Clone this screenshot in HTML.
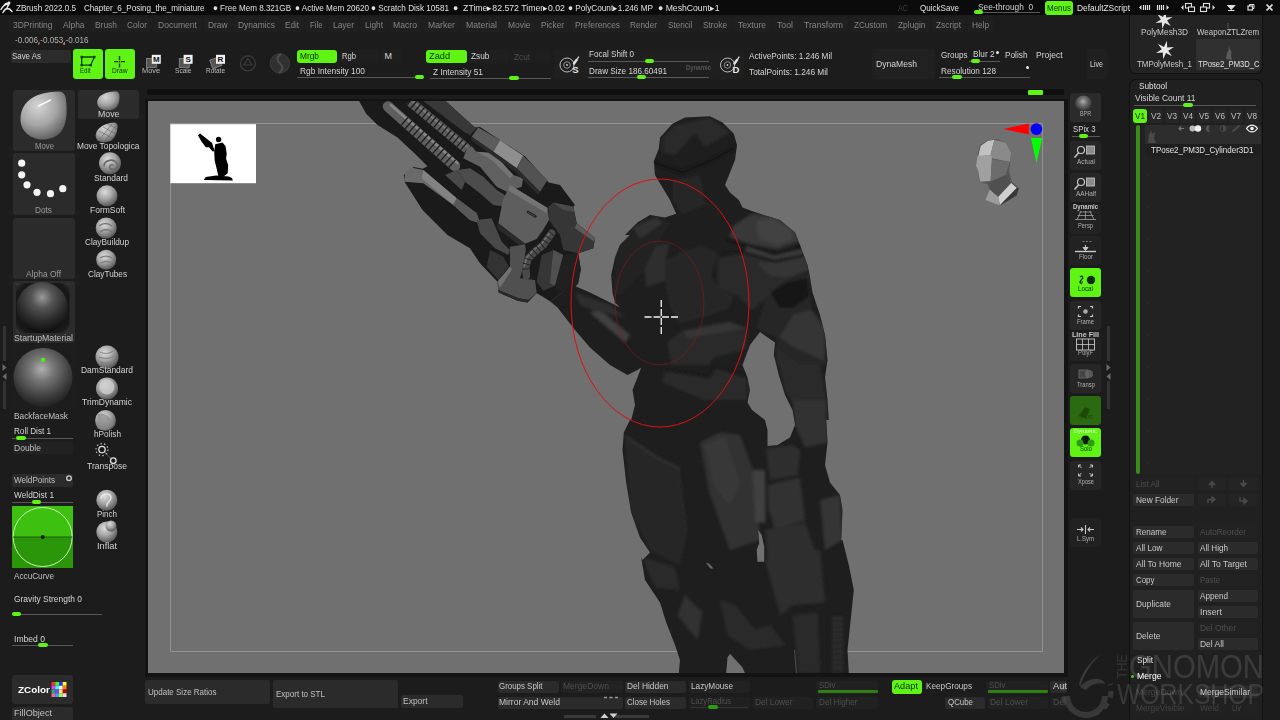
<!DOCTYPE html>
<html lang="en"><head><meta charset="utf-8"><title>ZBrush 2022.0.5 - Chapter_6_Posing_the_miniature</title>
<style>
html,body{margin:0;padding:0;background:#1c1c1c;}
body{width:1280px;height:720px;position:relative;overflow:hidden;font:9px "Liberation Sans", sans-serif;}
#bg div{position:absolute;}
#tx span{position:absolute;white-space:pre;line-height:1.16;transform-origin:0 0;}
#ov>*{position:absolute;}
</style></head><body>
<div id="bg">
<div style="left:0px;top:0px;width:1280px;height:15px;background:#0b0b0b;"></div>
<div style="left:974px;top:12px;width:66px;height:1px;background:#585858;"></div>
<div style="left:974px;top:10px;width:9px;height:4px;background:#60f414;border-radius:2px;"></div>
<div style="left:1044.5px;top:1px;width:28.5px;height:13.5px;background:#60f414;border-radius:3px;"></div>
<div style="left:7.5px;top:17px;width:49.5px;height:15px;background:#1f1f1f;border-radius:3px;"></div>
<div style="left:57.5px;top:17px;width:31.5px;height:15px;background:#1f1f1f;border-radius:3px;"></div>
<div style="left:89.5px;top:17px;width:32.0px;height:15px;background:#1f1f1f;border-radius:3px;"></div>
<div style="left:122px;top:17px;width:30px;height:15px;background:#1f1f1f;border-radius:3px;"></div>
<div style="left:152.5px;top:17px;width:49.0px;height:15px;background:#1f1f1f;border-radius:3px;"></div>
<div style="left:202.5px;top:17px;width:29.5px;height:15px;background:#1f1f1f;border-radius:3px;"></div>
<div style="left:232.5px;top:17px;width:47.0px;height:15px;background:#1f1f1f;border-radius:3px;"></div>
<div style="left:280px;top:17px;width:24px;height:15px;background:#1f1f1f;border-radius:3px;"></div>
<div style="left:304.5px;top:17px;width:22.5px;height:15px;background:#1f1f1f;border-radius:3px;"></div>
<div style="left:328px;top:17px;width:31px;height:15px;background:#1f1f1f;border-radius:3px;"></div>
<div style="left:359.5px;top:17px;width:28.0px;height:15px;background:#1f1f1f;border-radius:3px;"></div>
<div style="left:388px;top:17px;width:34px;height:15px;background:#1f1f1f;border-radius:3px;"></div>
<div style="left:423px;top:17px;width:37px;height:15px;background:#1f1f1f;border-radius:3px;"></div>
<div style="left:461px;top:17px;width:41px;height:15px;background:#1f1f1f;border-radius:3px;"></div>
<div style="left:503px;top:17px;width:32.5px;height:15px;background:#1f1f1f;border-radius:3px;"></div>
<div style="left:536px;top:17px;width:33px;height:15px;background:#1f1f1f;border-radius:3px;"></div>
<div style="left:569.5px;top:17px;width:55.0px;height:15px;background:#1f1f1f;border-radius:3px;"></div>
<div style="left:625px;top:17px;width:37px;height:15px;background:#1f1f1f;border-radius:3px;"></div>
<div style="left:663px;top:17px;width:34.5px;height:15px;background:#1f1f1f;border-radius:3px;"></div>
<div style="left:698px;top:17px;width:34px;height:15px;background:#1f1f1f;border-radius:3px;"></div>
<div style="left:733px;top:17px;width:38px;height:15px;background:#1f1f1f;border-radius:3px;"></div>
<div style="left:772px;top:17px;width:26px;height:15px;background:#1f1f1f;border-radius:3px;"></div>
<div style="left:799px;top:17px;width:49px;height:15px;background:#1f1f1f;border-radius:3px;"></div>
<div style="left:849px;top:17px;width:43px;height:15px;background:#1f1f1f;border-radius:3px;"></div>
<div style="left:892.5px;top:17px;width:37.5px;height:15px;background:#1f1f1f;border-radius:3px;"></div>
<div style="left:931px;top:17px;width:35px;height:15px;background:#1f1f1f;border-radius:3px;"></div>
<div style="left:967px;top:17px;width:27px;height:15px;background:#1f1f1f;border-radius:3px;"></div>
<div style="left:37.5px;top:42.5px;width:1.5px;height:2px;background:#c85a14;"></div>
<div style="left:63px;top:42.5px;width:1.5px;height:2px;background:#c85a14;"></div>
<div style="left:10.5px;top:49.5px;width:60.5px;height:13px;background:#2b2b2b;border-radius:2px;"></div>
<div style="left:73px;top:49px;width:30px;height:30px;background:#60f414;border-radius:3px;"></div>
<div style="left:105px;top:49px;width:30px;height:30px;background:#60f414;border-radius:3px;"></div>
<div style="left:297px;top:49.5px;width:40px;height:13px;background:#60f414;border-radius:3px;"></div>
<div style="left:339px;top:49.5px;width:40px;height:13px;background:#1f1f1f;border-radius:2px;"></div>
<div style="left:381px;top:49.5px;width:20px;height:13px;background:#1f1f1f;border-radius:2px;"></div>
<div style="left:297px;top:77px;width:127px;height:1px;background:#585858;"></div>
<div style="left:414.5px;top:75px;width:9.5px;height:4px;background:#60f414;border-radius:2px;"></div>
<div style="left:426px;top:49.5px;width:41px;height:13px;background:#60f414;border-radius:3px;"></div>
<div style="left:469px;top:49.5px;width:40px;height:13px;background:#1f1f1f;border-radius:2px;"></div>
<div style="left:511px;top:49.5px;width:40px;height:13px;background:#1e1e1e;border-radius:2px;"></div>
<div style="left:430px;top:78px;width:121px;height:1px;background:#585858;"></div>
<div style="left:509px;top:76px;width:10px;height:4px;background:#60f414;border-radius:2px;"></div>
<div style="left:555px;top:49px;width:189px;height:30px;background:#1f1f1f;border-radius:3px;"></div>
<div style="left:588px;top:61px;width:121px;height:1px;background:#585858;"></div>
<div style="left:644.8px;top:59px;width:9.400000000000091px;height:4px;background:#60f414;border-radius:2px;"></div>
<div style="left:588px;top:77px;width:121px;height:1px;background:#585858;"></div>
<div style="left:636.5px;top:75px;width:9.5px;height:4px;background:#60f414;border-radius:2px;"></div>
<div style="left:872px;top:49px;width:63px;height:30px;background:#212121;border-radius:3px;"></div>
<div style="left:969px;top:61px;width:31px;height:1px;background:#585858;"></div>
<div style="left:970.5px;top:59px;width:9.5px;height:4px;background:#60f414;border-radius:2px;"></div>
<div style="left:996px;top:51px;width:3px;height:3px;background:#e8e8e8;border-radius:2px;"></div>
<div style="left:939px;top:77px;width:91px;height:1px;background:#585858;"></div>
<div style="left:952px;top:75px;width:10px;height:4px;background:#60f414;border-radius:2px;"></div>
<div style="left:1026px;top:66px;width:3px;height:3px;background:#e8e8e8;border-radius:2px;"></div>
<div style="left:1087px;top:49px;width:20px;height:30px;background:#202020;border-radius:3px;"></div>
<div style="left:147px;top:89px;width:917px;height:6px;background:#0f0f0f;"></div>
<div style="left:1027.5px;top:90px;width:15px;height:5px;background:#60f414;border-radius:1px;"></div>
<div style="left:144.5px;top:98.5px;width:923px;height:578px;background:#131313;"></div>
<div style="left:148px;top:101px;width:916px;height:572px;background:#707070;"></div>
<div style="left:2.8px;top:326px;width:2.8px;height:35px;background:#333;"></div>
<div style="left:2.8px;top:381px;width:2.8px;height:28px;background:#333;"></div>
<div style="left:13px;top:90px;width:62px;height:61px;background:#2b2b2b;border-radius:3px;"></div>
<div style="left:78px;top:90px;width:61px;height:29px;background:#2b2b2b;border-radius:3px;"></div>
<div style="left:13px;top:153px;width:62px;height:62px;background:#2b2b2b;border-radius:3px;"></div>
<div style="left:13px;top:218px;width:62px;height:61px;background:#2b2b2b;border-radius:3px;"></div>
<div style="left:13px;top:281px;width:62px;height:62px;background:#2b2b2b;border-radius:3px;"></div>
<div style="left:13px;top:345px;width:62px;height:64px;background:#1d1d1d;border-radius:3px;"></div>
<div style="left:12px;top:438px;width:61px;height:1px;background:#585858;"></div>
<div style="left:16px;top:436px;width:10px;height:4px;background:#60f414;border-radius:2px;"></div>
<div style="left:12px;top:442px;width:61px;height:12px;background:#222;border-radius:2px;"></div>
<div style="left:12px;top:474px;width:61px;height:12.5px;background:#2b2b2b;border-radius:2px;"></div>
<div style="left:12px;top:502px;width:61px;height:1px;background:#585858;"></div>
<div style="left:32px;top:500px;width:9px;height:4px;background:#60f414;border-radius:2px;"></div>
<div style="left:12px;top:506px;width:61px;height:30.5px;background:#3dc010;"></div>
<div style="left:12px;top:536.5px;width:61px;height:31px;background:#2c960a;"></div>
<div style="left:12px;top:614px;width:90px;height:1px;background:#585858;"></div>
<div style="left:12px;top:612px;width:9px;height:4px;background:#60f414;border-radius:2px;"></div>
<div style="left:12px;top:645px;width:61px;height:1px;background:#585858;"></div>
<div style="left:38px;top:643px;width:9.5px;height:4px;background:#60f414;border-radius:2px;"></div>
<div style="left:12px;top:674.5px;width:61px;height:29px;background:#2b2b2b;border-radius:3px;"></div>
<div style="left:12px;top:706.5px;width:61px;height:14px;background:#2b2b2b;border-radius:2px;"></div>
<div style="left:145px;top:680px;width:125px;height:23.5px;background:#2b2b2b;border-radius:2px;"></div>
<div style="left:273px;top:680px;width:124.5px;height:27.5px;background:#2b2b2b;border-radius:2px;"></div>
<div style="left:401px;top:695px;width:61.5px;height:12.5px;background:#2b2b2b;border-radius:2px;"></div>
<div style="left:497.5px;top:681px;width:61px;height:11.5px;background:#2b2b2b;border-radius:2px;"></div>
<div style="left:561px;top:681px;width:61.5px;height:11.5px;background:#222;border-radius:2px;"></div>
<div style="left:625px;top:681px;width:61px;height:11.5px;background:#2b2b2b;border-radius:2px;"></div>
<div style="left:689px;top:681px;width:61px;height:11.5px;background:#222;border-radius:2px;"></div>
<div style="left:816px;top:681px;width:61.5px;height:13px;background:#212121;border-radius:2px;"></div>
<div style="left:817.5px;top:690px;width:60px;height:3px;background:#2f7f12;border-radius:1px;"></div>
<div style="left:891.5px;top:680px;width:30px;height:13.5px;background:#60f414;border-radius:3px;"></div>
<div style="left:986px;top:681px;width:61.5px;height:13px;background:#212121;border-radius:2px;"></div>
<div style="left:987.5px;top:690px;width:60px;height:3px;background:#2f7f12;border-radius:1px;"></div>
<div style="left:1050px;top:681px;width:17px;height:11.5px;background:#2b2b2b;border-radius:2px;"></div>
<div style="left:497.5px;top:696.5px;width:125px;height:12px;background:#2b2b2b;border-radius:2px;"></div>
<div style="left:625px;top:696.5px;width:61px;height:12px;background:#2b2b2b;border-radius:2px;"></div>
<div style="left:689px;top:696.5px;width:61px;height:12px;background:#202020;border-radius:2px;"></div>
<div style="left:691px;top:706.5px;width:57px;height:1px;background:#333;"></div>
<div style="left:707.5px;top:704.5px;width:10.0px;height:4px;background:#2f9a12;border-radius:2px;"></div>
<div style="left:752.5px;top:696.5px;width:60px;height:12px;background:#212121;border-radius:2px;"></div>
<div style="left:816px;top:696.5px;width:61.5px;height:12px;background:#212121;border-radius:2px;"></div>
<div style="left:945px;top:696.5px;width:40px;height:12px;background:#2b2b2b;border-radius:2px;"></div>
<div style="left:988px;top:696.5px;width:60px;height:12px;background:#212121;border-radius:2px;"></div>
<div style="left:1050px;top:696.5px;width:17px;height:12px;background:#212121;border-radius:2px;"></div>
<div style="left:563.5px;top:715px;width:32.5px;height:3px;background:#3a3a3a;"></div>
<div style="left:615px;top:715px;width:33.5px;height:3px;background:#3a3a3a;"></div>
<div style="left:1070px;top:92.5px;width:31px;height:29px;background:#2b2b2b;border-radius:3px;"></div>
<div style="left:1070px;top:141px;width:31px;height:29px;background:#262626;border-radius:3px;"></div>
<div style="left:1070px;top:173px;width:31px;height:29px;background:#262626;border-radius:3px;"></div>
<div style="left:1070px;top:204.5px;width:31px;height:29px;background:#222;border-radius:3px;"></div>
<div style="left:1070px;top:236px;width:31px;height:29px;background:#222;border-radius:3px;"></div>
<div style="left:1070px;top:268px;width:31px;height:29px;background:#60f414;border-radius:3px;"></div>
<div style="left:1070px;top:301px;width:31px;height:29px;background:#262626;border-radius:3px;"></div>
<div style="left:1070px;top:332px;width:31px;height:29px;background:#222;border-radius:3px;"></div>
<div style="left:1070px;top:364px;width:31px;height:29px;background:#262626;border-radius:3px;"></div>
<div style="left:1070px;top:396px;width:31px;height:29px;background:#2c6a12;border-radius:3px;"></div>
<div style="left:1070px;top:428px;width:31px;height:29px;background:#60f414;border-radius:3px;"></div>
<div style="left:1070px;top:461px;width:31px;height:29px;background:#262626;border-radius:3px;"></div>
<div style="left:1070px;top:518px;width:31px;height:29px;background:#212121;border-radius:3px;"></div>
<div style="left:1072px;top:135.5px;width:28px;height:1px;background:#585858;"></div>
<div style="left:1079px;top:133.5px;width:9px;height:4px;background:#60f414;border-radius:2px;"></div>
<div style="left:1107px;top:326px;width:2.8px;height:35px;background:#333;"></div>
<div style="left:1107px;top:381px;width:2.8px;height:28px;background:#333;"></div>
<div style="left:1129px;top:15px;width:134px;height:58.5px;background:#111;border-radius:0 0 7px 7px;"></div>
<div style="left:1130px;top:15px;width:132px;height:57.5px;background:#232323;border-radius:0 0 6px 6px;"></div>
<div style="left:1196px;top:39px;width:63.5px;height:30.5px;background:#303030;border-radius:2px;"></div>
<div style="left:1129px;top:78.5px;width:134px;height:642px;background:#111;border-radius:7px 7px 0 0px;"></div>
<div style="left:1130px;top:79.5px;width:132px;height:640.5px;background:#202020;border-radius:6px 6px 0 0px;"></div>
<div style="left:1134px;top:105px;width:122px;height:1px;background:#585858;"></div>
<div style="left:1183px;top:103px;width:10px;height:4px;background:#60f414;border-radius:2px;"></div>
<div style="left:1148.5px;top:109px;width:14.5px;height:13.5px;background:#262626;border-radius:2px;"></div>
<div style="left:1164.5px;top:109px;width:14.5px;height:13.5px;background:#262626;border-radius:2px;"></div>
<div style="left:1180.5px;top:109px;width:14.5px;height:13.5px;background:#262626;border-radius:2px;"></div>
<div style="left:1196.5px;top:109px;width:14.5px;height:13.5px;background:#262626;border-radius:2px;"></div>
<div style="left:1212.5px;top:109px;width:14.5px;height:13.5px;background:#262626;border-radius:2px;"></div>
<div style="left:1228.5px;top:109px;width:14.5px;height:13.5px;background:#262626;border-radius:2px;"></div>
<div style="left:1244.5px;top:109px;width:14.5px;height:13.5px;background:#262626;border-radius:2px;"></div>
<div style="left:1132.5px;top:109px;width:14.5px;height:14px;background:#60f414;border-radius:3px;"></div>
<div style="left:1143px;top:124.5px;width:118px;height:349px;background:#222222;"></div>
<div style="left:1144.5px;top:124.5px;width:116px;height:32px;background:#2d2d2d;border-radius:2px;"></div>
<div style="left:1144.5px;top:144px;width:116px;height:12.5px;background:#1f1f1f;border-radius:0 0 2px 2px;"></div>
<div style="left:1135.5px;top:124.5px;width:4.5px;height:349px;background:#3a8a1c;border-radius:2px;"></div>
<div style="left:1147.5px;top:174px;width:1.5px;height:1.5px;background:#2c2c2c;"></div>
<div style="left:1147.5px;top:206px;width:1.5px;height:1.5px;background:#2c2c2c;"></div>
<div style="left:1147.5px;top:238px;width:1.5px;height:1.5px;background:#2c2c2c;"></div>
<div style="left:1147.5px;top:270px;width:1.5px;height:1.5px;background:#2c2c2c;"></div>
<div style="left:1147.5px;top:302px;width:1.5px;height:1.5px;background:#2c2c2c;"></div>
<div style="left:1147.5px;top:334px;width:1.5px;height:1.5px;background:#2c2c2c;"></div>
<div style="left:1147.5px;top:366px;width:1.5px;height:1.5px;background:#2c2c2c;"></div>
<div style="left:1147.5px;top:398px;width:1.5px;height:1.5px;background:#2c2c2c;"></div>
<div style="left:1147.5px;top:430px;width:1.5px;height:1.5px;background:#2c2c2c;"></div>
<div style="left:1147.5px;top:462px;width:1.5px;height:1.5px;background:#2c2c2c;"></div>
<div style="left:1133px;top:478px;width:61px;height:12px;background:#222;border-radius:2px;"></div>
<div style="left:1198px;top:478px;width:28px;height:12px;background:#242424;border-radius:2px;"></div>
<div style="left:1229px;top:478px;width:29px;height:12px;background:#242424;border-radius:2px;"></div>
<div style="left:1133px;top:494px;width:61px;height:12px;background:#2b2b2b;border-radius:2px;"></div>
<div style="left:1198px;top:494px;width:28px;height:12px;background:#242424;border-radius:2px;"></div>
<div style="left:1229px;top:494px;width:29px;height:12px;background:#242424;border-radius:2px;"></div>
<div style="left:1133px;top:526px;width:61px;height:12px;background:#2b2b2b;border-radius:2px;"></div>
<div style="left:1198px;top:526px;width:60px;height:12px;background:#222;border-radius:2px;"></div>
<div style="left:1133px;top:542px;width:61px;height:12px;background:#2b2b2b;border-radius:2px;"></div>
<div style="left:1198px;top:542px;width:60px;height:12px;background:#2b2b2b;border-radius:2px;"></div>
<div style="left:1133px;top:558px;width:61px;height:12px;background:#2b2b2b;border-radius:2px;"></div>
<div style="left:1198px;top:558px;width:60px;height:12px;background:#2b2b2b;border-radius:2px;"></div>
<div style="left:1133px;top:574px;width:61px;height:12px;background:#2b2b2b;border-radius:2px;"></div>
<div style="left:1198px;top:574px;width:60px;height:12px;background:#222;border-radius:2px;"></div>
<div style="left:1133px;top:590px;width:61px;height:28px;background:#2b2b2b;border-radius:2px;"></div>
<div style="left:1198px;top:590px;width:60px;height:12px;background:#2b2b2b;border-radius:2px;"></div>
<div style="left:1198px;top:606px;width:60px;height:12px;background:#2b2b2b;border-radius:2px;"></div>
<div style="left:1133px;top:622px;width:61px;height:28px;background:#2b2b2b;border-radius:2px;"></div>
<div style="left:1198px;top:622px;width:60px;height:12px;background:#222;border-radius:2px;"></div>
<div style="left:1198px;top:638px;width:60px;height:12px;background:#2b2b2b;border-radius:2px;"></div>
<div style="left:1131px;top:674.5px;width:3px;height:3px;background:#50d010;border-radius:2px;"></div>
<div style="left:1133px;top:686px;width:61px;height:12px;background:#212121;border-radius:2px;"></div>
<div style="left:1198px;top:686px;width:60px;height:12px;background:#2b2b2b;border-radius:2px;"></div>
<div style="left:1133px;top:702px;width:61px;height:12px;background:#212121;border-radius:2px;"></div>
<div style="left:1198px;top:702px;width:28px;height:12px;background:#212121;border-radius:2px;"></div>
<div style="left:1229px;top:702px;width:29px;height:12px;background:#212121;border-radius:2px;"></div>
</div>
<svg style="position:absolute;left:148px;top:101px" width="916" height="572" viewBox="148 101 916 572">
<defs><clipPath id="cb"><polygon points="672.5,123.8 685.0,117.5 710.0,116.2 722.5,122.5 733.8,133.8 737.0,145.0 735.0,160.0 730.0,172.5 725.0,185.0 730.0,192.5 738.8,200.0 742.5,207.5 752.5,211.2 760.0,213.8 780.0,220.0 795.0,232.5 800.0,245.0 807.5,265.0 810.0,277.5 812.5,292.5 820.0,315.0 825.0,335.0 827.5,360.0 825.0,377.5 827.5,400.0 828.8,420.0 826.2,420.0 827.5,442.5 825.0,465.0 830.0,482.5 840.0,495.0 842.5,510.0 841.2,540.0 842.5,540.0 848.8,565.0 853.8,590.0 851.2,615.0 847.5,650.0 848.8,673.2 745.0,673.2 742.5,667.5 730.0,653.8 727.5,657.5 726.2,673.2 678.8,673.2 680.0,660.0 675.0,645.0 666.2,622.5 660.0,602.5 645.0,580.0 641.2,557.5 642.5,560.0 650.0,552.5 640.0,537.5 631.2,512.5 626.2,482.5 622.5,450.0 623.8,432.5 630.0,420.0 631.2,420.0 635.0,405.0 632.5,390.0 637.5,377.5 641.2,367.5 637.5,370.0 627.5,375.0 610.0,365.0 590.0,347.5 575.0,330.0 557.5,307.5 550.0,301.2 572.5,285.0 590.0,292.5 610.0,302.5 620.0,307.5 615.0,302.5 612.5,292.5 611.2,275.0 615.0,257.5 620.0,245.0 630.0,235.0 625.0,235.0 637.5,222.5 650.0,215.0 665.0,217.5 676.2,213.8 670.0,200.0 662.5,187.5 655.0,175.0 653.8,161.2 658.8,148.8 660.0,137.5"/></clipPath><filter id="bl" x="-5%" y="-5%" width="110%" height="110%"><feGaussianBlur stdDeviation="1.6"/></filter><filter id="bl2" x="-5%" y="-5%" width="110%" height="110%"><feGaussianBlur stdDeviation="0.7"/></filter></defs>
<path d="M170.5 123.5H1042.5V651.5H170.5Z" fill="none" stroke="#939393" stroke-width="1"/>
<polygon points="358.8,100.5 445.0,100.5 475.0,127.5 480.0,127.0 500.0,140.0 525.0,156.2 548.8,182.5 560.0,185.0 575.0,205.0 573.3,206.7 576.7,223.3 595.0,238.3 593.3,248.3 578.3,253.3 580.8,270.0 576.7,283.3 572.5,285.0 550.0,301.2 543.3,297.0 536.7,293.3 527.5,302.5 517.5,300.8 498.7,292.5 497.5,281.7 480.0,263.3 470.0,248.3 447.5,235.0 422.5,210.0 405.0,182.5 403.8,175.0 413.8,167.0 422.5,168.8 427.5,166.2 415.0,153.8 397.5,137.5 377.5,125.0 366.2,113.8" fill="#1a1a1a" />
<polygon points="422.5,100.5 445.0,100.5 476.2,128.8 470.0,135.0 465.0,132.5" fill="#383838" />
<polyline points="409.5,101.0 472.0,153.0" fill="none" stroke="#5c5c5c" stroke-width="9.5" />
<polyline points="411.0,100.0 473.5,152.0" fill="none" stroke="#787878" stroke-width="2" />
<polyline points="409.5,101.0 472.0,153.0" fill="none" stroke="#1c1c1c" stroke-width="9.5" stroke-dasharray="1.3 3.7"/>
<polyline points="388.0,106.5 455.0,166.0" fill="none" stroke="#5e5e5e" stroke-width="10.5" stroke-linecap="round"/>
<polyline points="390.8,105.0 457.5,163.0" fill="none" stroke="#868686" stroke-width="2.6" stroke-linecap="round"/>
<polyline points="404.0,121.0 455.0,166.0" fill="none" stroke="#1c1c1c" stroke-width="10.5" stroke-dasharray="1.3 4"/>
<polygon points="456.7,170.0 470.0,168.3 483.3,176.7 496.7,190.0 510.0,198.3 506.7,206.7 493.3,205.0 480.0,193.3 465.0,181.7" fill="#4c4c4c" />
<polygon points="468.3,145.0 476.7,151.7 493.3,153.3 513.3,175.0 523.3,178.3 521.7,186.7 506.7,191.7 496.7,186.7 480.0,166.7 463.3,158.3" fill="#606060" />
<polygon points="476.7,151.7 493.3,153.3 513.3,175.0 510.0,178.3 491.7,160.0" fill="#747474" />
<polygon points="471.7,136.7 478.3,127.5 500.0,140.0 493.3,151.7" fill="#5c5c5c" />
<polygon points="493.3,151.7 500.0,140.0 523.3,155.8 516.7,168.3" fill="#8e8e8e" />
<polygon points="516.7,168.3 523.3,155.8 547.5,180.0 540.0,191.7" fill="#525252" />
<polygon points="471.7,136.7 493.3,151.7 516.7,168.3 540.0,191.7 538.3,195.0 515.0,171.7 491.7,155.0 470.8,140.0" fill="#2a2a2a" />
<polygon points="405.0,173.3 411.7,167.5 423.3,170.0 456.7,198.3 476.7,213.3 480.0,223.3 470.0,220.0 453.3,205.0 423.3,183.3 404.2,181.7" fill="#6a6a6a" />
<polygon points="423.3,170.0 456.7,198.3 453.3,205.0 421.7,178.3" fill="#828282" />
<polygon points="456.7,198.3 476.7,213.3 480.0,223.3 470.0,220.0 453.3,205.0" fill="#585858" />
<polygon points="445.0,175.0 456.7,170.0 465.0,181.7 461.7,190.0" fill="#4a4a4a" />
<polygon points="510.0,185.0 547.5,208.0 549.0,220.0 543.0,230.0 536.7,239.0 525.0,243.7 498.3,223.3 503.0,200.0" fill="#5e5e5e" />
<polygon points="510.0,185.0 547.5,208.0 546.5,213.0 508.0,190.5" fill="#747474" />
<polyline points="528.0,212.0 535.3,216.3" fill="none" stroke="#1c1c1c" stroke-width="2.6" stroke-linecap="round"/>
<polyline points="528.3,212.3 535.0,216.2" fill="none" stroke="#4a4a4a" stroke-width="1" stroke-linecap="round"/>
<polygon points="498.3,223.3 525.0,243.7 523.3,248.3 496.7,228.3" fill="#2a2a2a" />
<polygon points="476.7,220.0 491.7,218.3 501.7,241.7 510.0,250.0 508.3,255.0 495.0,248.3 480.0,233.3" fill="#484848" />
<polygon points="490.0,250.0 503.3,256.7 509.2,266.7 498.3,280.0 486.7,266.7" fill="#333" />
<polygon points="510.0,246.7 525.0,244.2 525.8,250.0 522.5,270.0 520.0,278.3 535.0,280.0 536.7,293.3 528.3,300.0 518.3,298.3 498.3,290.0 497.5,281.7 510.0,266.7" fill="#505050" />
<polygon points="497.5,281.7 510.0,266.7 512.0,269.2 500.3,287.5" fill="#727272" />
<polygon points="498.3,290.0 518.3,298.3 528.3,300.0 527.5,302.5 517.5,300.8 498.7,292.5" fill="#282828" />
<polygon points="536.7,281.7 541.7,255.0 553.3,250.0 563.3,255.0 560.0,270.0 555.0,285.8 543.3,290.8" fill="#363636" />
<polygon points="553.3,250.0 563.3,255.0 555.0,285.8 550.0,283.3" fill="#505050" />
<polygon points="548.3,206.7 553.3,202.5 573.3,206.7 576.7,223.3 595.0,238.3 593.3,248.3 578.3,253.3 563.3,250.0 560.0,235.0 549.2,220.0" fill="#363636" />
<polygon points="576.7,223.3 595.0,238.3 594.2,241.7 575.0,228.3" fill="#5a5a5a" />
<polygon points="553.3,202.5 573.3,206.7 574.2,211.7 563.3,210.0" fill="#4a4a4a" />
<polyline points="551.7,233.3 543.3,245.0 535.0,251.7 528.3,258.3 525.8,266.7 526.3,275.8" fill="none" stroke="#4a4a4a" stroke-width="7.5" stroke-linecap="round" stroke-linejoin="round"/>
<polyline points="550.0,232.5 541.7,243.7 533.3,250.3 526.7,257.5 524.2,266.3" fill="none" stroke="#707070" stroke-width="1.6" stroke-linecap="round" stroke-linejoin="round"/>
<polyline points="551.7,233.3 543.3,245.0 535.0,251.7 528.3,258.3 525.8,266.7 526.3,273.3" fill="none" stroke="#222" stroke-width="7.5" stroke-dasharray="0.9 4.1"/>
<polygon points="563.3,255.0 578.3,253.3 580.8,270.0 578.3,283.3 570.0,293.3 556.7,290.0 555.0,285.8" fill="#202020" />
<polygon points="672.5,123.8 685.0,117.5 710.0,116.2 722.5,122.5 733.8,133.8 737.0,145.0 735.0,160.0 730.0,172.5 725.0,185.0 730.0,192.5 738.8,200.0 742.5,207.5 752.5,211.2 760.0,213.8 780.0,220.0 795.0,232.5 800.0,245.0 807.5,265.0 810.0,277.5 812.5,292.5 820.0,315.0 825.0,335.0 827.5,360.0 825.0,377.5 827.5,400.0 828.8,420.0 826.2,420.0 827.5,442.5 825.0,465.0 830.0,482.5 840.0,495.0 842.5,510.0 841.2,540.0 842.5,540.0 848.8,565.0 853.8,590.0 851.2,615.0 847.5,650.0 848.8,673.2 745.0,673.2 742.5,667.5 730.0,653.8 727.5,657.5 726.2,673.2 678.8,673.2 680.0,660.0 675.0,645.0 666.2,622.5 660.0,602.5 645.0,580.0 641.2,557.5 642.5,560.0 650.0,552.5 640.0,537.5 631.2,512.5 626.2,482.5 622.5,450.0 623.8,432.5 630.0,420.0 631.2,420.0 635.0,405.0 632.5,390.0 637.5,377.5 641.2,367.5 637.5,370.0 627.5,375.0 610.0,365.0 590.0,347.5 575.0,330.0 557.5,307.5 550.0,301.2 572.5,285.0 590.0,292.5 610.0,302.5 620.0,307.5 615.0,302.5 612.5,292.5 611.2,275.0 615.0,257.5 620.0,245.0 630.0,235.0 625.0,235.0 637.5,222.5 650.0,215.0 665.0,217.5 676.2,213.8 670.0,200.0 662.5,187.5 655.0,175.0 653.8,161.2 658.8,148.8 660.0,137.5" fill="#1e1e1e" />
<g clip-path="url(#cb)"><g filter="url(#bl)">
<polygon points="675.0,125.0 710.0,118.0 730.0,132.5 705.0,147.5 695.0,132.5 675.0,155.0 662.5,152.5 662.5,137.5" fill="#2a2a2a" />
<polygon points="672.5,180.0 700.0,175.0 705.0,205.0 682.5,213.8 672.5,200.0" fill="#262626" />
<polygon points="717.7,257.3 738.3,252.7 775.0,261.9 807.1,255.0 809.4,271.0 784.2,280.2 765.8,298.5 752.1,310.0 738.3,296.2 717.7,287.1" fill="#2a2a2a" />
<polygon points="756.7,261.9 775.0,263.0 807.1,256.1 808.9,269.9 786.4,277.9 770.4,275.6" fill="#343434" />
<polygon points="733.7,225.2 752.1,213.7 775.0,216.0 793.3,227.5 800.2,241.2 777.3,249.3 747.5,243.5 729.2,236.7" fill="#383838" />
<polygon points="756.7,220.6 775.0,219.5 791.0,229.8 793.3,239.0 777.3,244.7 758.9,239.0" fill="#424242" />
<polygon points="747.5,245.8 775.0,253.8 802.5,249.3 804.8,253.8 775.0,259.6 745.2,251.6" fill="#3a3a3a" />
<polyline points="726.9,239.0 747.5,245.4 775.0,254.5 801.3,247.0" fill="none" stroke="#101010" stroke-width="2" />
<polyline points="720.0,256.1 742.9,252.2 775.0,261.4 807.1,255.0" fill="none" stroke="#101010" stroke-width="1.6" />
<polygon points="765.8,298.5 784.2,280.2 809.4,273.3 811.6,310.0 825.4,328.3 826.5,365.0 775.0,365.0 777.3,337.5 756.7,328.3" fill="#262626" />
<polygon points="793.3,314.6 811.6,310.0 825.4,328.3 824.3,360.4 793.3,346.7 779.6,337.5" fill="#353535" />
<polygon points="770.4,291.7 786.4,282.5 807.1,277.9 809.4,296.2 793.3,307.7 779.6,307.7" fill="#151515" />
<polygon points="775.0,347.5 800.0,365.0 820.0,365.0 827.5,410.0 797.5,410.0 785.0,390.0" fill="#2c2c2c" />
<polygon points="665.0,261.9 678.7,252.7 701.7,245.8 717.7,252.7 710.8,275.6 717.7,287.1 733.7,296.2 729.2,307.7 710.8,314.6 678.7,323.7 669.6,305.4 665.0,280.2" fill="#282828" />
<polygon points="644.4,268.7 655.8,245.8 669.6,243.5 665.0,261.9 665.0,280.2 646.7,287.1" fill="#2f2f2f" />
<polygon points="667.3,342.1 683.3,330.6 729.2,321.4 747.5,328.3 745.2,348.9 713.1,358.1 708.5,365.0 671.9,365.0" fill="#2c2c2c" />
<polygon points="683.3,331.1 729.2,321.9 745.2,328.3 724.6,331.8 687.9,338.6" fill="#363636" />
<polygon points="616.9,245.8 632.9,225.2 655.8,216.0 669.6,222.9 655.8,245.8 644.4,268.7 623.7,291.7 612.3,296.2" fill="#232323" />
<polygon points="632.9,227.5 655.8,217.2 662.7,222.9 639.8,239.0" fill="#303030" />
<polygon points="665.0,370.0 710.0,377.5 715.0,367.5 747.5,377.5 747.5,400.0 705.0,400.0 662.5,382.5" fill="#2b2b2b" />
<polygon points="700.0,442.5 720.0,432.5 740.0,435.0 755.0,475.0 760.0,540.0 730.0,550.0 710.0,495.0" fill="#313131" />
<polygon points="705.0,445.0 725.0,437.5 740.0,482.5 730.0,505.0 715.0,487.5" fill="#393939" />
<polygon points="752.5,470.0 765.0,470.0 765.5,522.5 755.5,522.5" fill="#404040" />
<polygon points="625.0,437.5 680.0,470.0 687.5,530.0 680.0,565.0 650.0,550.0 630.0,510.0" fill="#272727" />
<polyline points="625.5,436.2 655.0,456.2 680.0,468.8" fill="none" stroke="#3a3a3a" stroke-width="1.5" />
<polygon points="766.2,448.8 792.5,445.0 800.0,450.0 797.5,475.0 770.0,480.0" fill="#2e2e2e" />
<polygon points="767.5,485.0 800.0,477.5 805.0,520.0 775.0,530.0 768.8,510.0" fill="#313131" />
<polygon points="765.0,530.0 805.0,522.5 815.0,550.0 820.0,580.0 770.0,580.0" fill="#2d2d2d" />
<polygon points="820.0,500.0 840.0,495.0 842.5,540.0 825.0,550.0" fill="#343434" />
<polygon points="792.5,400.0 826.2,400.0 827.5,442.5 805.0,447.5 795.0,425.0" fill="#303030" />
<polygon points="765.0,560.0 820.0,550.0 825.0,602.5 792.5,605.0 780.0,615.0" fill="#2f2f2f" />
<polygon points="792.5,615.0 817.5,612.5 820.0,673.2 798.8,673.2" fill="#2b2b2b" />
<polyline points="837.5,615.0 837.5,673.2" fill="none" stroke="#2e2e2e" stroke-width="11" />
<polyline points="837.5,615.0 837.5,673.2" fill="none" stroke="#181818" stroke-width="11" stroke-dasharray="1.2 4.3"/>
<polygon points="685.0,595.0 702.5,612.5 697.5,640.0 677.5,615.0" fill="#323232" />
<polygon points="720.0,600.0 735.0,605.0 755.0,630.0 770.0,625.0 785.0,645.0 750.0,650.0 727.5,635.0" fill="#2b2b2b" />
<polygon points="642.5,557.5 675.0,567.5 680.0,590.0 655.0,587.5" fill="#2b2b2b" />
<polygon points="590.0,312.5 600.0,310.0 630.0,335.0 625.0,342.5" fill="#404040" />
<polygon points="575.0,292.5 610.0,305.0 625.0,317.5 600.0,312.5 580.0,305.0" fill="#2d2d2d" />
<polyline points="662.5,370.0 710.0,377.5 715.0,367.5 747.5,377.5" fill="none" stroke="#141414" stroke-width="1.5" />
<polyline points="653.8,162.5 682.5,172.5 707.5,162.5 735.0,147.5" fill="none" stroke="#121212" stroke-width="3" />
</g></g>
<polygon points="760.0,332.0 750.0,345.0 742.5,365.0 747.5,377.5 750.0,390.0 747.5,402.5 752.0,410.0 765.0,420.0 767.5,430.0 767.5,446.0 777.5,445.0 790.0,437.5 795.0,425.0 792.5,410.0 785.0,395.0 778.8,375.0 773.8,355.0 775.0,342.5" fill="#707070" />
<polygon points="758.3,530.0 761.7,535.0 764.2,546.7 764.2,561.7 757.5,561.7 756.7,550.0 759.2,543.3" fill="#707070" />
<polygon points="706.0,563.0 709.0,563.5 713.5,568.5 710.5,568.5" fill="#6a6a6a" />
<polyline points="794.5,650.0 796.5,673.2" fill="none" stroke="#555" stroke-width="0.9" />
<ellipse cx="659.5" cy="303" rx="44.5" ry="62" fill="none" stroke="#8a1818" stroke-width="0.8" opacity="0.8"/>
<ellipse cx="660" cy="303" rx="89" ry="124" fill="none" stroke="#e01010" stroke-width="1"/>
<path d="M644.5 317h16M662 317h16M661.25 300v16M661.25 318v16" stroke="#f4f4f4" stroke-width="1.3" stroke-dasharray="7 2" fill="none"/>
<rect x="170.4" y="124.2" width="85.6" height="59" fill="#fff"/>
<polygon points="198.0,135.3 200.1,133.5 212.1,143.1 213.1,146.2 214.7,150.9 212.6,151.5 209.0,147.3 205.8,147.3 201.1,141.0" fill="#000" />
<polygon points="215.2,144.2 222.5,142.6 225.6,146.2 226.7,153.5 226.1,158.8 228.2,165.0 227.7,173.3 225.6,174.9 224.1,175.9 218.3,175.9 216.8,169.2 214.7,160.8 214.2,151.5" fill="#000" />
<polygon points="203.8,180.1 205.8,177.0 216.2,175.4 228.8,176.5 231.9,178.0 232.9,180.6" fill="#000" />
<circle cx="218.6" cy="139.5" r="2.7" fill="#000"/>
<polygon points="1003.5,129.1 1028.8,123.4 1028.8,134.4" fill="#ff0000" />
<circle cx="1036.4" cy="129.1" r="5.8" fill="#0000ff"/>
<polygon points="1031.0,138.0 1042.2,138.0 1036.4,162.7" fill="#00ff00" />
<polygon points="979.9,145.1 987.5,140.6 996.7,139.0 1005.8,142.8 1011.2,152.8 1010.4,161.9 1008.9,171.1 1011.9,181.8 1018.8,187.9 1016.5,195.6 999.7,205.5 985.2,200.1 989.8,189.4 987.5,184.1 979.1,181.8 978.3,171.1 976.0,165.8 978.3,158.9 977.6,154.3" fill="#555" />
<polygon points="980.6,145.9 987.5,140.9 994.4,139.8 990.6,155.1 978.3,156.6" fill="#c2c2c2" />
<polygon points="977.6,155.8 992.1,155.1 990.6,181.0 979.9,181.8 978.3,171.1 976.0,165.8" fill="#a0a0a0" />
<polygon points="994.4,139.8 1005.8,142.8 1011.2,152.8 1010.1,161.9 992.4,158.6 990.6,155.1" fill="#8a8a8a" />
<polygon points="992.1,158.9 1009.7,162.3 1005.8,174.9 990.6,181.8" fill="#6c6c6c" />
<polygon points="990.6,181.8 1005.8,174.9 1011.2,183.3 998.2,197.1 989.8,189.4" fill="#505050" />
<polygon points="985.2,200.1 989.8,189.4 998.2,197.1 999.7,205.5" fill="#9c9c9c" />
<polygon points="998.2,197.1 1011.2,183.0 1016.8,187.9 1000.0,205.0" fill="#d0d0d0" />
<polygon points="1016.8,187.9 1018.8,188.2 1016.5,195.6 1000.0,205.5" fill="#383838" />
</svg>
<div id="ov">
<svg width="1280" height="720" viewBox="0 0 1280 720" style="left:0;top:0;font-family:'Liberation Sans',sans-serif"><defs><radialGradient id="gb" cx="0.4" cy="0.32" r="0.75"><stop offset="0" stop-color="#dcdcdc"/><stop offset="0.45" stop-color="#a8a8a8"/><stop offset="1" stop-color="#4a4a4a"/></radialGradient><radialGradient id="gm" cx="0.5" cy="0.3" r="0.7"><stop offset="0" stop-color="#9a9a9a"/><stop offset="0.3" stop-color="#555"/><stop offset="0.7" stop-color="#282828"/><stop offset="1" stop-color="#0e0e0e"/></radialGradient><radialGradient id="gm2" cx="0.48" cy="0.36" r="0.66"><stop offset="0" stop-color="#b0b0b0"/><stop offset="0.3" stop-color="#777"/><stop offset="0.75" stop-color="#3a3a3a"/><stop offset="1" stop-color="#1e1e1e"/></radialGradient><radialGradient id="gmove" cx="0.38" cy="0.3" r="0.8"><stop offset="0" stop-color="#d6d6d6"/><stop offset="0.5" stop-color="#a6a6a6"/><stop offset="0.85" stop-color="#6a6a6a"/><stop offset="1" stop-color="#4a4a4a"/></radialGradient><radialGradient id="gbox" cx="0.5" cy="0.5" r="0.75"><stop offset="0" stop-color="#121212"/><stop offset="0.75" stop-color="#181818"/><stop offset="1" stop-color="#444"/></radialGradient></defs>
<path d="M59 91.5c4 0 6.5 3 7 8 .8 8 1.5 18-2 27-3 8-11 13-21 13-12 0-22-8-22.500-19C20 108 27 99 38 95c8-3 15-3.500 21-3.500z" fill="url(#gmove)"/>
<path d="M38.500 106l12-6" stroke="#fff" stroke-width="1.6" stroke-linecap="round" opacity=".9"/>
<path d="M116 91.500c2.500 0 3.500 2 3.500 5 0 5-1 9-4 11.500-3 2.500-9 3-13 1.500-4-1.500-6-5-5-9 1-4 5-6.500 10-8 3-1 6-1 8.500-1z" fill="url(#gmove)"/>
<path d="M114 122.500c2.500 0 4 2 3.500 5-.5 5-2 9-5 12-3 2.500-9 3.500-13 2-3-1.200-4.500-4.500-3.500-8 1-4 4.500-7 9-9 3.500-1.300 6.500-2 9-2z" fill="url(#gmove)"/>
<path d="M99 131l15 8M103 127l13 7M108 124l9 5M100 139l12-15M105 141l11-15M111 141l6-9" stroke="#555" stroke-width=".5" fill="none"/>
<circle cx="110" cy="163.2" r="11" fill="url(#gb)"/>
<circle cx="107" cy="195.8" r="10.5" fill="url(#gb)"/>
<circle cx="106.2" cy="228" r="10.5" fill="url(#gb)"/>
<circle cx="106.2" cy="259.7" r="10" fill="url(#gb)"/>
<circle cx="107" cy="357" r="11.5" fill="url(#gb)"/>
<circle cx="107" cy="388.5" r="11" fill="url(#gb)"/>
<circle cx="105.5" cy="420.4" r="10.5" fill="url(#gb)"/>
<circle cx="106.8" cy="500.2" r="10.5" fill="url(#gb)"/>
<circle cx="106.8" cy="532" r="10.5" fill="url(#gb)"/>
<path d="M104 166c0-5 8-8 12-4s-1 9-5 7c-3-1.500-1-5 2-4" stroke="#6a6a6a" stroke-width="1.600" fill="none" stroke-linecap="round"/>
<path d="M99 226c4-3 9-3 13 0M100 232c4-3 8-3 12 0" stroke="#777" stroke-width="1.400" fill="none"/>
<path d="M100 258c4-2.500 8-2.500 12 0M101 263c3-2 7-2 10 0" stroke="#7c7c7c" stroke-width="1.200" fill="none"/>
<path d="M100 352c4 2 9 2 13-1M99 357c5 2 11 2 15-1M101 362c4 1.500 8 1.500 11-.5" stroke="#808080" stroke-width="1" fill="none"/>
<circle cx="107" cy="387" r="7.500" fill="#cfcfcf" opacity=".75"/>
<path d="M98 414c5-2 12 2 16 10-4 6-12 8-17 4z" fill="#8a8a8a" opacity=".7"/>
<path d="M101 498c2-5 9-5 10-1s-5 5-4 9" stroke="#eee" stroke-width="1.600" fill="none" stroke-linecap="round" opacity=".8"/>
<circle cx="111" cy="526" r="5.500" fill="url(#gb)"/>
<circle cx="102" cy="449.600" r="3.200" fill="none" stroke="#e0e0e0" stroke-width="1.300"/><circle cx="102" cy="449.600" r="6" fill="none" stroke="#bbb" stroke-width="1.200" stroke-dasharray="1.500 2.200"/>
<path d="M104.500 452l7 7" stroke="#888" stroke-width="1" stroke-dasharray="1.500 1"/><circle cx="113.300" cy="460.700" r="2.800" fill="#1c1c1c" stroke="#ddd" stroke-width="1.300"/>
<circle cx="21.7" cy="163.2" r="3.600" fill="#f4f4f4"/>
<circle cx="21.7" cy="174.8" r="3.600" fill="#f4f4f4"/>
<circle cx="27" cy="184.8" r="3.600" fill="#f4f4f4"/>
<circle cx="37" cy="192.3" r="3.600" fill="#f4f4f4"/>
<circle cx="50.5" cy="193.7" r="3.600" fill="#f4f4f4"/>
<circle cx="62.8" cy="188.7" r="3.600" fill="#f4f4f4"/>
<rect x="16" y="283" width="53.500" height="50" fill="url(#gbox)"/>
<circle cx="42.2" cy="307.5" r="25.5" fill="url(#gm)"/>
<circle cx="43" cy="377.4" r="29.5" fill="url(#gm2)"/>
<circle cx="43" cy="360" r="2.300" fill="#4cf010"/>
<circle cx="69" cy="478.200" r="2.300" fill="none" stroke="#c8c8c8" stroke-width="1.400"/>
<circle cx="42.700" cy="537" r="29.500" fill="none" stroke="#c8f0b4" stroke-width="1"/>
<path d="M13 537h59.500" stroke="#1c5a08" stroke-width="1"/><circle cx="42.700" cy="537" r="2" fill="#0a1a04"/>
<rect x="51.50" y="682.00" width="3.750" height="3.750" fill="#ff3030"/>
<rect x="55.25" y="682.00" width="3.750" height="3.750" fill="#30ff30"/>
<rect x="59.00" y="682.00" width="3.750" height="3.750" fill="#3030ff"/>
<rect x="62.75" y="682.00" width="3.750" height="3.750" fill="#ffff30"/>
<rect x="51.50" y="685.75" width="3.750" height="3.750" fill="#ff30ff"/>
<rect x="55.25" y="685.75" width="3.750" height="3.750" fill="#30ffff"/>
<rect x="59.00" y="685.75" width="3.750" height="3.750" fill="#ffffff"/>
<rect x="62.75" y="685.75" width="3.750" height="3.750" fill="#ff8000"/>
<rect x="51.50" y="689.50" width="3.750" height="3.750" fill="#00c060"/>
<rect x="55.25" y="689.50" width="3.750" height="3.750" fill="#8040ff"/>
<rect x="59.00" y="689.50" width="3.750" height="3.750" fill="#ffe080"/>
<rect x="62.75" y="689.50" width="3.750" height="3.750" fill="#c00000"/>
<rect x="51.50" y="693.25" width="3.750" height="3.750" fill="#ff60a0"/>
<rect x="55.25" y="693.25" width="3.750" height="3.750" fill="#40a0ff"/>
<rect x="59.00" y="693.25" width="3.750" height="3.750" fill="#a0ff40"/>
<rect x="62.75" y="693.25" width="3.750" height="3.750" fill="#e0e0e0"/>
<path d="M2.500 364l4 3.500-4 3.500zM6.500 373l-4 3.500 4 3.500z" fill="#6a6a6a"/>
<path d="M1106.500 364l4 3.500-4 3.500zM1110.500 373l-4 3.500 4 3.500z" fill="#6a6a6a"/>
<path d="M81.700 57h12.600l-3.600 8.200h-9z" fill="none" stroke="#123a04" stroke-width="1.300"/>
<rect x="80.5" y="55.8" width="2.400" height="2.400" fill="#123a04"/>
<rect x="93.1" y="55.8" width="2.400" height="2.400" fill="#123a04"/>
<rect x="89.5" y="64.0" width="2.400" height="2.400" fill="#123a04"/>
<rect x="80.5" y="64.0" width="2.400" height="2.400" fill="#123a04"/>
<path d="M114 61.600h4M121 61.600h4M119.500 56v4M119.500 63.500v4" stroke="#123a04" stroke-width="1.400"/><rect x="118.700" y="60.800" width="1.600" height="1.600" fill="#123a04"/>
<rect x="146.4" y="58.400" width="10" height="9" fill="#555" stroke="#8a8a8a" stroke-width=".8"/>
<rect x="151.8" y="54.800" width="9" height="9" fill="#f0f0f0"/>
<text x="156.3" y="62.300" font-size="8" font-weight="700" text-anchor="middle" fill="#111">M</text>
<rect x="179.3" y="58.400" width="10" height="9" fill="#555" stroke="#8a8a8a" stroke-width=".8"/>
<rect x="183.6" y="54.800" width="9" height="9" fill="#f0f0f0"/>
<text x="188.1" y="62.300" font-size="8" font-weight="700" text-anchor="middle" fill="#111">S</text>
<rect x="211" y="58.400" width="9.500" height="9" fill="#555" stroke="#8a8a8a" stroke-width=".8" transform="rotate(-20 215.500 63)"/>
<rect x="216" y="54.800" width="9" height="9" fill="#f0f0f0"/><text x="220.500" y="62.300" font-size="8" font-weight="700" text-anchor="middle" fill="#111">R</text>
<circle cx="247.900" cy="63.400" r="7.500" fill="none" stroke="#3c3c3c" stroke-width="1.300"/><path d="M247.900 58.500l4 6.500h-8z" fill="none" stroke="#3c3c3c" stroke-width="1.200" stroke-linejoin="round"/>
<circle cx="279.900" cy="63.400" r="9.700" fill="#303030" stroke="#3e3e3e" stroke-width="1"/><path d="M281 54c-5 3-4 7-1 9.500s4 6.500-1 9.500" stroke="#4a4a4a" stroke-width="2.200" fill="none"/>
<circle cx="567" cy="65" r="7" fill="none" stroke="#bdbdbd" stroke-width="1"/><circle cx="567" cy="65" r="3.300" fill="none" stroke="#9a9a9a" stroke-width=".9"/><circle cx="567" cy="65" r=".9" fill="#ccc"/>
<text x="575.5" y="73" font-size="9.500" font-weight="700" text-anchor="middle" fill="#e8e8e8">S</text>
<path d="M574 63.500l2.500-3.500" stroke="#e0e0e0" stroke-width="2.400" stroke-linecap="round"/><path d="M577 59.500l1.500-2.500" stroke="#e0e0e0" stroke-width="1.300" stroke-linecap="round"/>
<circle cx="727.5" cy="65" r="7" fill="none" stroke="#bdbdbd" stroke-width="1"/><circle cx="727.5" cy="65" r="3.300" fill="none" stroke="#9a9a9a" stroke-width=".9"/><circle cx="727.5" cy="65" r=".9" fill="#ccc"/>
<text x="736.0" y="73" font-size="9.500" font-weight="700" text-anchor="middle" fill="#e8e8e8">D</text>
<path d="M734.5 63.500l2.500-3.500" stroke="#e0e0e0" stroke-width="2.400" stroke-linecap="round"/><path d="M737.5 59.500l1.500-2.500" stroke="#e0e0e0" stroke-width="1.300" stroke-linecap="round"/>
<path d="M1 9.500c2-4 5-5.500 7.500-5.200M4.500 4.800c1.500-1.700 4-2 5-1M3 12.500c1.500-3 4-4.500 6.500-3.500l2.500 2.500M8.500 5l-2 4" stroke="#e8e8e8" stroke-width="1.500" fill="none" stroke-linecap="round"/><circle cx="9" cy="2.800" r="1.400" fill="#e8e8e8"/>
<path d="M1139 7.500l2.500-2.500v5z" fill="#e0e0e0"/><path d="M1143.500 5v5M1145.500 5v5M1147.500 5v5M1149.500 5v5" stroke="#e0e0e0" stroke-width="1.200"/>
<path d="M1169 7.500l-2.500-2.500v5z" fill="#e0e0e0"/><path d="M1157.500 5v5M1159.500 5v5M1161.500 5v5M1163.500 5v5" stroke="#e0e0e0" stroke-width="1.200"/>
<path d="M1181 7.500l2.500-2.500v5z" fill="#e0e0e0"/><rect x="1185.500" y="3.500" width="6" height="4.500" fill="none" stroke="#e0e0e0" stroke-width="1.100"/><rect x="1188.500" y="7" width="6" height="4.500" fill="#0b0b0b" stroke="#e0e0e0" stroke-width="1.100"/>
<path d="M1215 7.500l-2.500-2.500v5z" fill="#e0e0e0"/><rect x="1203.500" y="3.500" width="6" height="4.500" fill="none" stroke="#e0e0e0" stroke-width="1.100"/><rect x="1200.500" y="7" width="6" height="4.500" fill="#0b0b0b" stroke="#e0e0e0" stroke-width="1.100"/>
<path d="M1228 5.500h6.500l-3.250 3.500zM1228 10.500h6.500" fill="#e0e0e0" stroke="#e0e0e0" stroke-width="1.200"/>
<rect x="1248" y="6" width="4.500" height="4" fill="none" stroke="#e0e0e0" stroke-width="1.200"/><path d="M1249.500 6v-1.500h4.500v4h-1.500" fill="none" stroke="#e0e0e0" stroke-width="1"/>
<path d="M1266.500 4.500l6 6M1272.500 4.500l-6 6" stroke="#e0e0e0" stroke-width="1.700"/>
<clipPath id="cs"><rect x="1130" y="15" width="132" height="60"/></clipPath>
<polygon points="1165.8,11.2 1166.1,17.6 1172.5,17.1 1167.1,20.6 1170.7,26.0 1165.0,23.0 1162.2,28.8 1161.9,22.4 1155.5,22.9 1160.9,19.4 1157.3,14.0 1163.0,17.0" fill="#e4e4e4" clip-path="url(#cs)"/>
<polygon points="1166.9,40.7 1167.2,47.5 1174.0,47.0 1168.2,50.7 1172.1,56.3 1166.0,53.1 1163.1,59.3 1162.8,52.5 1156.0,53.0 1161.8,49.3 1157.9,43.7 1164.0,46.9" fill="#e8e8e8"/>
<path d="M1226 59l1-6 1.500-3 .500-4 1 4 1.500 1-.500 5 1 4z" fill="#5a5a5a"/>
<path d="M1228 23v5" stroke="#555" stroke-width="1"/>
<path d="M1148 143l1-8 2-5 1 4 3-2-1 6 2 5z" fill="#4a4a4a"/>
<path d="M1184 128.500h-4.500M1181 126.500l-2 2 2 2" stroke="#777" stroke-width="1.100" fill="none"/>
<circle cx="1192.500" cy="128.500" r="3" fill="#bbb"/><circle cx="1198" cy="128.500" r="3.200" fill="#f0f0f0"/>
<path d="M1210 125.500a3.200 3.200 0 100 6 4 4 0 010-6z" fill="#555"/>
<circle cx="1223" cy="128.500" r="3" fill="none" stroke="#484848" stroke-width="1"/><path d="M1223 125.500a3 3 0 010 6z" fill="#484848"/>
<path d="M1233 131l6-5" stroke="#4a4a4a" stroke-width="1.800" stroke-linecap="round"/>
<path d="M1246.500 128.500c3-4.500 8-4.500 11 0-3 4.500-8 4.500-11 0z" fill="none" stroke="#f0f0f0" stroke-width="1.200"/><circle cx="1252" cy="128.500" r="1.800" fill="#f0f0f0"/>
<path d="M1212 488v-6M1209.500 484.500l2.500-3 2.500 3z" stroke="#4a4a4a" stroke-width="1.400" fill="#4a4a4a"/>
<path d="M1243.500 480v6M1241 483.500l2.500 3 2.500-3z" stroke="#4a4a4a" stroke-width="1.400" fill="#4a4a4a"/>
<path d="M1208 503v-3.500h6M1212 497l3 2.500-3 2.500z" stroke="#4a4a4a" stroke-width="1.400" fill="none"/>
<path d="M1240 497v4h6M1244 498.500l3 2.500-3 2.500z" stroke="#4a4a4a" stroke-width="1.400" fill="none"/>
<path d="M600.500 718l4-4.500 4 4.500zM609.500 713.500l4 4.500 4-4.500z" fill="#d0d0d0"/>
<path d="M604 697.500h3M609.500 697.500h3M615 697.500h3" stroke="#999" stroke-width="1.500"/>
<text transform="translate(1127 678.500) rotate(-90)" font-size="14" fill="#fff" opacity=".10" textLength="24" lengthAdjust="spacingAndGlyphs">THE</text>
<g opacity=".12" fill="none" stroke="#fff"><path d="M1067 696a19 19 0 0038 0" stroke-width="6"/><path d="M1064 684a24 24 0 1046 0" stroke-width="5" stroke-dasharray="6.500 6.060"/></g>
<path d="M1101 654c-9 8-17 20-21 33 5-6 12-9 19-8 4 1 6 3 6 5-7-2-14 0-19 6-4-1-6-3-7-6 3-12 11-23 22-30z" fill="#fff" opacity=".13"/>
<circle cx="1083.5" cy="104" r="8.5" fill="url(#gm2)"/>
<circle cx="1081" cy="150" r="3.500" fill="none" stroke="#c8c8c8" stroke-width="1.200"/><path d="M1078.500 153l-4 4.500" stroke="#c8c8c8" stroke-width="1.500"/>
<rect x="1086.500" y="146" width="8" height="8" fill="#8a8a8a" stroke="#c8c8c8" stroke-width=".8"/>
<circle cx="1081" cy="182" r="3.500" fill="none" stroke="#c8c8c8" stroke-width="1.200"/><path d="M1078.500 185l-4 4.500" stroke="#c8c8c8" stroke-width="1.500"/>
<rect x="1086.500" y="178" width="8" height="8" fill="#8a8a8a" stroke="#c8c8c8" stroke-width=".8"/>
<path d="M1075 219.500h21M1077.500 215.500h16M1079.500 212h12M1085.500 211v9M1081 211l-4 9M1090 211l4 9" stroke="#a0a0a0" stroke-width=".8" fill="none"/>
<path d="M1075 251.500h21" stroke="#c8c8c8" stroke-width="1.400"/><path d="M1085.500 245v4M1083 247.500l2.500 3 2.500-3z" stroke="#c8c8c8" stroke-width="1" fill="#c8c8c8"/>
<path d="M1082.500 241.500h2M1086 241.500h2M1089.500 241.500h2" stroke="#777" stroke-width="1.200"/>
<circle cx="1091" cy="280" r="4.200" fill="#0c2a02"/><path d="M1080 277c2-2 4 0 2 2s-3 4 0 5M1079 282h4" stroke="#123a04" stroke-width="1.200" fill="none"/>
<circle cx="1085.500" cy="311.500" r="2.300" fill="#aaa"/><path d="M1078.500 308.500v-2h2.500M1092.500 308.500v-2h-2.500M1078.500 314.500v2h2.500M1092.500 314.500v2h-2.500" stroke="#c8c8c8" stroke-width="1.200" fill="none"/>
<rect x="1076.500" y="339" width="18" height="11" fill="none" stroke="#c8c8c8" stroke-width=".9"/><path d="M1076.500 344.500h18M1082.500 339v11M1088.500 339v11" stroke="#c8c8c8" stroke-width=".8"/>
<rect x="1079" y="370" width="9" height="8" fill="#444" stroke="#777" stroke-width=".7"/><circle cx="1089" cy="374" r="4" fill="#666" opacity=".8"/>
<path d="M1079 416l6-9 5 2-4 9z" fill="#1d4a0a"/>
<circle cx="1085.500" cy="440" r="4.500" fill="#0a1a04"/><circle cx="1080" cy="443" r="3.500" fill="#2d9a10"/><circle cx="1091" cy="443" r="3.500" fill="#2d9a10"/>
<path d="M1078.500 465l3 3M1092.500 465l-3 3M1078.500 476l3-3M1092.500 476l-3-3M1078.500 465h2.500M1078.500 465v2.500M1092.500 465h-2.500M1092.500 465v2.500M1078.500 476h2.500M1078.500 476v-2.500M1092.500 476h-2.500M1092.500 476v-2.500" stroke="#c8c8c8" stroke-width="1" fill="none"/>
<path d="M1085.500 525v9M1077 529.500h6M1088 529.500h6M1081 527.500l2 2-2 2M1090 527.500l-2 2 2 2" stroke="#c8c8c8" stroke-width="1.100" fill="none"/>
</svg>
</div>
<div id="tx">
<span style="left:16px;top:3.1px;color:#e0e0e0;transform:scaleX(0.902)">ZBrush 2022.0.5</span>
<span style="left:84px;top:3.1px;color:#e0e0e0;transform:scaleX(0.899)">Chapter_6_Posing_the_miniature</span>
<span style="left:213px;top:3.1px;color:#e0e0e0;transform:scaleX(0.897)">● Free Mem 8.321GB</span>
<span style="left:295px;top:3.1px;color:#e0e0e0;transform:scaleX(0.903)">● Active Mem 20620</span>
<span style="left:371px;top:3.1px;color:#e0e0e0;transform:scaleX(0.907)">● Scratch Disk 10581</span>
<span style="left:452.5px;top:3.1px;color:#e0e0e0;transform:scaleX(0.968)">●  ZTime▸82.572 Timer▸0.02</span>
<span style="left:567.5px;top:3.1px;color:#e0e0e0;transform:scaleX(0.914)">● PolyCount▸1.246 MP</span>
<span style="left:657.5px;top:3.1px;color:#e0e0e0;transform:scaleX(0.961)">● MeshCount▸1</span>
<span style="left:897.5px;top:3.1px;color:#3c3c3c;transform:scaleX(0.799)">AC</span>
<span style="left:920px;top:3.1px;color:#e4e4e4;transform:scaleX(0.896)">QuickSave</span>
<span style="left:977.5px;top:1.8px;color:#d0d0d0;transform:scaleX(0.924)">See-through  0</span>
<span style="left:1047px;top:3.0px;color:#0a3000;transform:scaleX(0.888)">Menus</span>
<span style="left:1077px;top:3.1px;color:#e4e4e4;transform:scaleX(0.929)">DefaultZScript</span>
<span style="left:12.5px;top:19.8px;color:#858585;transform:scaleX(0.940)">3DPrinting</span>
<span style="left:62.5px;top:19.8px;color:#858585;transform:scaleX(0.934)">Alpha</span>
<span style="left:94.5px;top:19.8px;color:#858585;transform:scaleX(0.936)">Brush</span>
<span style="left:127px;top:19.8px;color:#858585;transform:scaleX(0.930)">Color</span>
<span style="left:157.5px;top:19.8px;color:#858585;transform:scaleX(0.950)">Document</span>
<span style="left:207.5px;top:19.8px;color:#858585;transform:scaleX(0.928)">Draw</span>
<span style="left:237.5px;top:19.8px;color:#858585;transform:scaleX(0.936)">Dynamics</span>
<span style="left:285px;top:19.8px;color:#858585;transform:scaleX(0.902)">Edit</span>
<span style="left:309.5px;top:19.8px;color:#858585;transform:scaleX(0.861)">File</span>
<span style="left:333px;top:19.8px;color:#858585;transform:scaleX(0.933)">Layer</span>
<span style="left:364.5px;top:19.8px;color:#858585;transform:scaleX(0.922)">Light</span>
<span style="left:393px;top:19.8px;color:#858585;transform:scaleX(0.959)">Macro</span>
<span style="left:428px;top:19.8px;color:#858585;transform:scaleX(0.964)">Marker</span>
<span style="left:466px;top:19.8px;color:#858585;transform:scaleX(0.968)">Material</span>
<span style="left:508px;top:19.8px;color:#858585;transform:scaleX(0.937)">Movie</span>
<span style="left:541px;top:19.8px;color:#858585;transform:scaleX(0.919)">Picker</span>
<span style="left:574.5px;top:19.8px;color:#858585;transform:scaleX(0.927)">Preferences</span>
<span style="left:630px;top:19.8px;color:#858585;transform:scaleX(0.914)">Render</span>
<span style="left:668px;top:19.8px;color:#858585;transform:scaleX(0.907)">Stencil</span>
<span style="left:703px;top:19.8px;color:#858585;transform:scaleX(0.923)">Stroke</span>
<span style="left:738px;top:19.8px;color:#858585;transform:scaleX(0.949)">Texture</span>
<span style="left:777px;top:19.8px;color:#858585;transform:scaleX(0.969)">Tool</span>
<span style="left:804px;top:19.8px;color:#858585;transform:scaleX(0.959)">Transform</span>
<span style="left:854px;top:19.8px;color:#858585;transform:scaleX(0.904)">ZCustom</span>
<span style="left:897.5px;top:19.8px;color:#858585;transform:scaleX(0.931)">Zplugin</span>
<span style="left:936px;top:19.8px;color:#858585;transform:scaleX(0.926)">Zscript</span>
<span style="left:972px;top:19.8px;color:#858585;transform:scaleX(0.918)">Help</span>
<span style="left:14.5px;top:35.1px;color:#b4b4b4;transform:scaleX(0.901)">-0.006,-0.053,-0.016</span>
<span style="left:12px;top:50.8px;color:#d6d6d6;transform:scaleX(0.878)">Save As</span>
<span style="left:79.6px;top:65.9px;color:#0a3000;transform:scaleX(0.754);font-size:8px">Edit</span>
<span style="left:111.6px;top:65.9px;color:#0a3000;transform:scaleX(0.835);font-size:8px">Draw</span>
<span style="left:142px;top:65.9px;color:#bdbdbd;transform:scaleX(0.920);font-size:8px">Move</span>
<span style="left:174.5px;top:65.9px;color:#bdbdbd;transform:scaleX(0.824);font-size:8px">Scale</span>
<span style="left:206px;top:65.9px;color:#bdbdbd;transform:scaleX(0.806);font-size:8px">Rotate</span>
<span style="left:300px;top:50.8px;color:#0a3000;transform:scaleX(0.926)">Mrgb</span>
<span style="left:342px;top:50.8px;color:#d6d6d6;transform:scaleX(0.848)">Rgb</span>
<span style="left:384.5px;top:50.8px;color:#d6d6d6;transform:scaleX(1.000)">M</span>
<span style="left:300px;top:65.8px;color:#d6d6d6;transform:scaleX(0.928)">Rgb Intensity 100</span>
<span style="left:429px;top:50.8px;color:#0a3000;transform:scaleX(1.024)">Zadd</span>
<span style="left:471px;top:50.8px;color:#d6d6d6;transform:scaleX(0.924)">Zsub</span>
<span style="left:514px;top:52.3px;color:#4e4e4e;transform:scaleX(0.913)">Zcut</span>
<span style="left:432.5px;top:66.8px;color:#d6d6d6;transform:scaleX(0.925)">Z Intensity 51</span>
<span style="left:589px;top:49.3px;color:#d6d6d6;transform:scaleX(0.899)">Focal Shift 0</span>
<span style="left:589px;top:65.8px;color:#d6d6d6;transform:scaleX(0.906)">Draw Size 186.60491</span>
<span style="left:686px;top:64.4px;color:#555;transform:scaleX(0.857);font-size:7px;font-weight:700">Dynamic</span>
<span style="left:749px;top:50.8px;color:#d6d6d6;transform:scaleX(0.912)">ActivePoints: 1.246 Mil</span>
<span style="left:749px;top:66.8px;color:#d6d6d6;transform:scaleX(0.923)">TotalPoints: 1.246 Mil</span>
<span style="left:876px;top:58.8px;color:#d6d6d6;transform:scaleX(0.953)">DynaMesh</span>
<span style="left:941px;top:50.3px;color:#d6d6d6;transform:scaleX(0.898)">Groups</span>
<span style="left:972.5px;top:49.3px;color:#d6d6d6;transform:scaleX(0.914)">Blur 2</span>
<span style="left:1004.5px;top:50.3px;color:#d6d6d6;transform:scaleX(0.918)">Polish</span>
<span style="left:1036px;top:50.3px;color:#d6d6d6;transform:scaleX(0.946)">Project</span>
<span style="left:941px;top:65.8px;color:#d6d6d6;transform:scaleX(0.916)">Resolution 128</span>
<span style="left:1090px;top:58.8px;color:#d6d6d6;transform:scaleX(0.787)">Live</span>
<span style="left:35px;top:141.3px;color:#9a9a9a;transform:scaleX(0.863)">Move</span>
<span style="left:97.5px;top:108.8px;color:#d2d2d2;transform:scaleX(0.977)">Move</span>
<span style="left:76.5px;top:141.3px;color:#d2d2d2;transform:scaleX(0.927)">Move Topologica</span>
<span style="left:94px;top:172.8px;color:#d2d2d2;transform:scaleX(0.931)">Standard</span>
<span style="left:90px;top:204.8px;color:#d2d2d2;transform:scaleX(0.946)">FormSoft</span>
<span style="left:85px;top:236.8px;color:#d2d2d2;transform:scaleX(0.916)">ClayBuildup</span>
<span style="left:88px;top:268.8px;color:#d2d2d2;transform:scaleX(0.914)">ClayTubes</span>
<span style="left:81px;top:364.8px;color:#d2d2d2;transform:scaleX(0.936)">DamStandard</span>
<span style="left:82px;top:396.8px;color:#d2d2d2;transform:scaleX(0.949)">TrimDynamic</span>
<span style="left:94px;top:428.8px;color:#d2d2d2;transform:scaleX(0.914)">hPolish</span>
<span style="left:87px;top:460.8px;color:#d2d2d2;transform:scaleX(0.948)">Transpose</span>
<span style="left:97px;top:508.8px;color:#d2d2d2;transform:scaleX(0.888)">Pinch</span>
<span style="left:97px;top:540.8px;color:#d2d2d2;transform:scaleX(1.025)">Inflat</span>
<span style="left:35px;top:204.8px;color:#9a9a9a;transform:scaleX(0.918)">Dots</span>
<span style="left:26px;top:268.8px;color:#9a9a9a;transform:scaleX(0.937)">Alpha Off</span>
<span style="left:14px;top:332.8px;color:#c0c0c0;transform:scaleX(0.967)">StartupMaterial</span>
<span style="left:14px;top:411.3px;color:#c0c0c0;transform:scaleX(0.923)">BackfaceMask</span>
<span style="left:14px;top:425.8px;color:#d6d6d6;transform:scaleX(0.902)">Roll Dist 1</span>
<span style="left:14px;top:442.8px;color:#c0c0c0;transform:scaleX(0.946)">Double</span>
<span style="left:14px;top:475.3px;color:#c0c0c0;transform:scaleX(0.904)">WeldPoints</span>
<span style="left:14px;top:489.8px;color:#d6d6d6;transform:scaleX(0.923)">WeldDist 1</span>
<span style="left:14px;top:571.3px;color:#c0c0c0;transform:scaleX(0.909)">AccuCurve</span>
<span style="left:14px;top:593.8px;color:#d6d6d6;transform:scaleX(0.937)">Gravity Strength 0</span>
<span style="left:14px;top:633.8px;color:#d6d6d6;transform:scaleX(0.953)">Imbed 0</span>
<span style="left:18px;top:683.5px;color:#ffffff;transform:scaleX(1.045);font-size:9.5px;font-weight:700">ZColor</span>
<span style="left:14px;top:707.8px;color:#c0c0c0;transform:scaleX(1.013)">FillObject</span>
<span style="left:148px;top:686.8px;color:#c0c0c0;transform:scaleX(0.889)">Update Size Ratios</span>
<span style="left:276px;top:688.8px;color:#c0c0c0;transform:scaleX(0.890)">Export to STL</span>
<span style="left:403px;top:695.8px;color:#c0c0c0;transform:scaleX(0.942)">Export</span>
<span style="left:499px;top:681.3px;color:#c8c8c8;transform:scaleX(0.878)">Groups Split</span>
<span style="left:563px;top:681.3px;color:#4e4e4e;transform:scaleX(0.948)">MergeDown</span>
<span style="left:627px;top:681.3px;color:#c8c8c8;transform:scaleX(0.932)">Del Hidden</span>
<span style="left:691px;top:681.3px;color:#c8c8c8;transform:scaleX(0.912)">LazyMouse</span>
<span style="left:818.5px;top:679.8px;color:#4e4e4e;transform:scaleX(0.868)">SDiv</span>
<span style="left:894px;top:681.3px;color:#0a3000;transform:scaleX(1.020)">Adapt</span>
<span style="left:926px;top:681.3px;color:#c8c8c8;transform:scaleX(0.910)">KeepGroups</span>
<span style="left:988.5px;top:679.8px;color:#4e4e4e;transform:scaleX(0.868)">SDiv</span>
<span style="left:1053px;top:681.3px;color:#c8c8c8;transform:scaleX(1.036)">Aut</span>
<span style="left:499px;top:697.3px;color:#c8c8c8;transform:scaleX(0.948)">Mirror And Weld</span>
<span style="left:627px;top:697.3px;color:#c8c8c8;transform:scaleX(0.886)">Close Holes</span>
<span style="left:691px;top:695.8px;color:#4e4e4e;transform:scaleX(0.850)">LazyRadius</span>
<span style="left:755px;top:697.3px;color:#4e4e4e;transform:scaleX(0.925)">Del Lower</span>
<span style="left:819px;top:697.3px;color:#4e4e4e;transform:scaleX(0.905)">Del Higher</span>
<span style="left:948px;top:697.3px;color:#c8c8c8;transform:scaleX(0.876)">QCube</span>
<span style="left:990px;top:697.3px;color:#4e4e4e;transform:scaleX(0.938)">Del Lower</span>
<span style="left:1053px;top:697.3px;color:#4e4e4e;transform:scaleX(0.962)">Del</span>
<span style="left:1073px;top:123.8px;color:#d6d6d6;transform:scaleX(0.865)">SPix 3</span>
<span style="left:1080.0px;top:109.9px;color:#b0b0b0;transform:scaleX(0.764);font-size:7px">BPR</span>
<span style="left:1076.5px;top:158.4px;color:#b0b0b0;transform:scaleX(0.925);font-size:7px">Actual</span>
<span style="left:1075.5px;top:190.4px;color:#b0b0b0;transform:scaleX(0.918);font-size:7px">AAHalf</span>
<span style="left:1078.0px;top:221.9px;color:#b0b0b0;transform:scaleX(0.820);font-size:7px">Persp</span>
<span style="left:1078.5px;top:253.4px;color:#b0b0b0;transform:scaleX(0.878);font-size:7px">Floor</span>
<span style="left:1078.0px;top:285.4px;color:#0a3000;transform:scaleX(0.896);font-size:7px">Local</span>
<span style="left:1077.0px;top:318.4px;color:#b0b0b0;transform:scaleX(0.840);font-size:7px">Frame</span>
<span style="left:1078.0px;top:349.4px;color:#b0b0b0;transform:scaleX(0.838);font-size:7px">PolyF</span>
<span style="left:1076.5px;top:381.4px;color:#b0b0b0;transform:scaleX(0.836);font-size:7px">Transp</span>
<span style="left:1078.0px;top:413.4px;color:#1d4a0a;transform:scaleX(0.803);font-size:7px">Ghost</span>
<span style="left:1079.5px;top:445.4px;color:#0a3000;transform:scaleX(0.856);font-size:7px">Solo</span>
<span style="left:1077.5px;top:478.4px;color:#b0b0b0;transform:scaleX(0.806);font-size:7px">Xpose</span>
<span style="left:1077.0px;top:535.4px;color:#b0b0b0;transform:scaleX(0.857);font-size:7px">L.Sym</span>
<span style="left:1073px;top:202.9px;color:#c8c8c8;transform:scaleX(0.857);font-size:7px;font-weight:700">Dynamic</span>
<span style="left:1072px;top:330.9px;color:#c8c8c8;transform:scaleX(1.021);font-size:7px;font-weight:700">Line Fill</span>
<span style="left:1074px;top:427.5px;color:#c8ffb0;transform:scaleX(0.919);font-size:6px;font-weight:700">Dynamic</span>
<span style="left:1141px;top:26.8px;color:#c8c8c8;transform:scaleX(0.921)">PolyMesh3D</span>
<span style="left:1197px;top:26.8px;color:#c8c8c8;transform:scaleX(0.881)">WeaponZTLZrem</span>
<span style="left:1137px;top:58.8px;color:#c8c8c8;transform:scaleX(0.880)">TMPolyMesh_1</span>
<span style="left:1197.5px;top:58.8px;color:#e0e0e0;transform:scaleX(0.848)">TPose2_PM3D_C</span>
<span style="left:1139px;top:80.8px;color:#e0e0e0;transform:scaleX(0.917)">Subtool</span>
<span style="left:1134.5px;top:93.3px;color:#d6d6d6;transform:scaleX(0.935)">Visible Count 11</span>
<span style="left:1134.5px;top:110.8px;color:#0a3000;transform:scaleX(0.908)">V1</span>
<span style="left:1151px;top:110.8px;color:#c0c0c0;transform:scaleX(0.908)">V2</span>
<span style="left:1166.5px;top:110.8px;color:#c0c0c0;transform:scaleX(0.908)">V3</span>
<span style="left:1183px;top:110.8px;color:#c0c0c0;transform:scaleX(0.908)">V4</span>
<span style="left:1198.5px;top:110.8px;color:#c0c0c0;transform:scaleX(0.908)">V5</span>
<span style="left:1214.5px;top:110.8px;color:#c0c0c0;transform:scaleX(0.908)">V6</span>
<span style="left:1231px;top:110.8px;color:#c0c0c0;transform:scaleX(0.908)">V7</span>
<span style="left:1246.5px;top:110.8px;color:#c0c0c0;transform:scaleX(0.908)">V8</span>
<span style="left:1151px;top:144.8px;color:#e0e0e0;transform:scaleX(0.887)">TPose2_PM3D_Cylinder3D1</span>
<span style="left:1135.5px;top:478.8px;color:#4e4e4e;transform:scaleX(0.903)">List All</span>
<span style="left:1135.5px;top:494.8px;color:#c8c8c8;transform:scaleX(0.924)">New Folder</span>
<span style="left:1135.5px;top:526.8px;color:#c8c8c8;transform:scaleX(0.896)">Rename</span>
<span style="left:1200px;top:526.8px;color:#4e4e4e;transform:scaleX(0.901)">AutoReorder</span>
<span style="left:1135.5px;top:542.8px;color:#c8c8c8;transform:scaleX(0.913)">All Low</span>
<span style="left:1200px;top:542.8px;color:#c8c8c8;transform:scaleX(0.903)">All High</span>
<span style="left:1135.5px;top:558.8px;color:#c8c8c8;transform:scaleX(0.941)">All To Home</span>
<span style="left:1200px;top:558.8px;color:#c8c8c8;transform:scaleX(0.955)">All To Target</span>
<span style="left:1135.5px;top:574.8px;color:#c8c8c8;transform:scaleX(0.880)">Copy</span>
<span style="left:1200px;top:574.8px;color:#4e4e4e;transform:scaleX(0.869)">Paste</span>
<span style="left:1135.5px;top:598.8px;color:#c8c8c8;transform:scaleX(0.933)">Duplicate</span>
<span style="left:1200px;top:590.8px;color:#c8c8c8;transform:scaleX(0.902)">Append</span>
<span style="left:1200px;top:606.8px;color:#c8c8c8;transform:scaleX(0.977)">Insert</span>
<span style="left:1135.5px;top:630.8px;color:#c8c8c8;transform:scaleX(0.942)">Delete</span>
<span style="left:1200px;top:622.8px;color:#4e4e4e;transform:scaleX(0.935)">Del Other</span>
<span style="left:1200px;top:638.8px;color:#c8c8c8;transform:scaleX(0.941)">Del All</span>
<span style="left:1136.5px;top:655.3px;color:#e0e0e0;transform:scaleX(0.913)">Split</span>
<span style="left:1136.5px;top:671.3px;color:#ffffff;transform:scaleX(0.960)">Merge</span>
<span style="left:1135.5px;top:686.8px;color:#444;transform:scaleX(0.958)">MergeDown</span>
<span style="left:1200px;top:686.8px;color:#c8c8c8;transform:scaleX(0.943)">MergeSimilar</span>
<span style="left:1135.5px;top:702.8px;color:#444;transform:scaleX(0.935)">MergeVisible</span>
<span style="left:1200px;top:702.8px;color:#444;transform:scaleX(0.934)">Weld</span>
<span style="left:1232px;top:702.8px;color:#444;transform:scaleX(0.818)">Uv</span>
<span style="left:1129px;top:647.9px;color:rgba(255,255,255,0.12);transform:scaleX(0.887);font-size:33px">GNOMON</span>
<span style="left:1117px;top:676.6px;color:rgba(255,255,255,0.12);transform:scaleX(0.824);font-size:30px">WORKSHOP</span>
</div>
</body></html>
